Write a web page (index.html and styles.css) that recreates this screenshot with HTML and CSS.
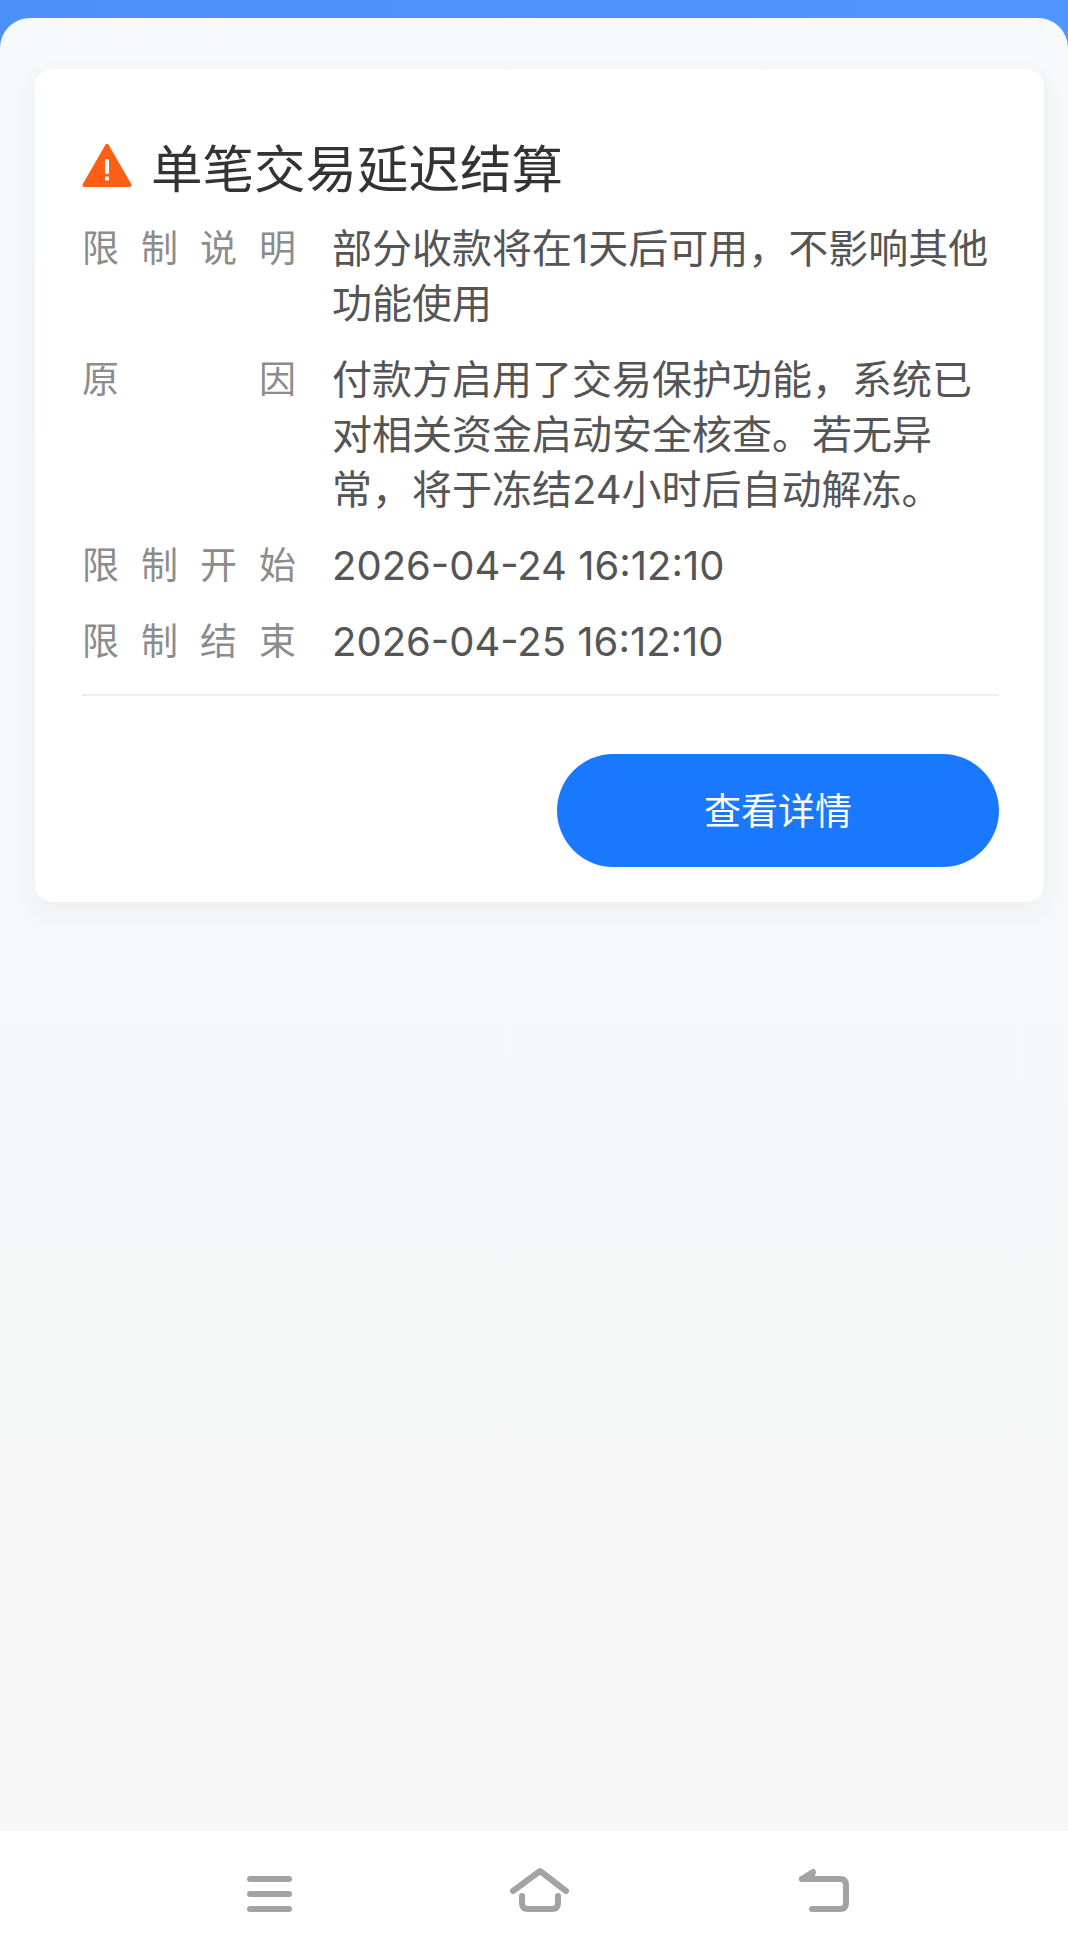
FILE: index.html
```html
<!DOCTYPE html>
<html lang="zh-CN">
  <head>
    <meta charset="utf-8" />
    <title>单笔交易延迟结算</title>
    <link rel="stylesheet" href="styles.css">
  </head>

  <body>
    <div class="page">
      <main class="sheet">
        <section class="card">
          <h1 class="card-title">
            <svg class="warn-icon" viewBox="0 0 50 44" aria-hidden="true">
              <path d="M25 2 L47.5 41 H2.5 Z" fill="#ff5f14" stroke="#ff5f14" stroke-width="4" stroke-linejoin="round" />
              <rect x="23" y="15" width="4" height="15" rx="1.5" fill="#fff" />
              <rect x="23" y="32.5" width="4" height="4" rx="1" fill="#fff" />
            </svg>
            单笔交易延迟结算
          </h1>

          <dl class="info">
            <div class="info-row">
              <dt>限制说明</dt>
              <dd>部分收款将在1天后可用，不影响其他功能使用</dd>
            </div>
            <div class="info-row">
              <dt>原因</dt>
              <dd>付款方启用了交易保护功能，系统已对相关资金启动安全核查。若无异常，将于冻结24小时后自动解冻。</dd>
            </div>
            <div class="info-row">
              <dt>限制开始</dt>
              <dd>2026-04-24 16:12:10</dd>
            </div>
            <div class="info-row">
              <dt>限制结束</dt>
              <dd>2026-04-25 16:12:10</dd>
            </div>
          </dl>

          <div class="card-actions">
            <button class="btn-primary" type="button">查看详情</button>
          </div>
        </section>
      </main>

      <nav class="navbar">
        <svg class="nav-icon" viewBox="0 0 70 70" aria-hidden="true">
          <path d="M15 18 H54 M15 33 H54 M15 48 H54" />
        </svg>
        <svg class="nav-icon" viewBox="0 0 70 70" aria-hidden="true">
          <path d="M8 30 L35 10 L61 30" />
          <path d="M17 35 V42 Q17 48 23 48 H47 Q53 48 53 42 V35" />
        </svg>
        <svg class="nav-icon nav-back" viewBox="0 0 70 70" aria-hidden="true">
          <path d="M12 18 L23 11 L21 18 H50 Q56 18 56 24 V42 Q56 48 50 48 H22" />
          <path d="M12 18 H22" />
        </svg>
      </nav>
    </div>
  </body>
</html>
```

FILE: styles.css
```css
html,
body {
  margin: 0;
  padding: 0;
}

body {
  font-family: Inter, "Noto Sans CJK SC", sans-serif;
  background: #fff;
}

.page {
  display: flex;
  flex-direction: column;
  height: 1956px;
  padding-top: 18px;
  box-sizing: border-box;
  background: linear-gradient(90deg, #4a90f6, #4f96ff);
}

.sheet {
  flex: 1;
  padding: 51px 24px 0 35px;
  border-radius: 30px 30px 0 0;
  background: linear-gradient(180deg, #f6f8fa, #f7f7f7);
}

.card {
  padding: 66px 45px 35px 47px;
  border-radius: 18px;
  background: #fff;
  box-shadow: 0 8px 24px rgba(30, 50, 90, 0.05);
}

.card-title {
  display: flex;
  align-items: center;
  gap: 19px;
  margin: 1px 0 19px;
  color: #333;
  font-size: 51.5px;
  font-weight: 400;
  line-height: 66px;
}

.warn-icon {
  flex: none;
  width: 50px;
  height: 44px;
  margin-bottom: 6px;
}

.info {
  margin: 0;
  padding-bottom: 25px;
  border-bottom: 2px solid #eee;
}

.info-row {
  display: flex;
  gap: 36px;
  margin-bottom: 21px;
  font-size: 40px;
  line-height: 55px;
}

.info-row:last-child {
  margin-bottom: 0;
}

.info-row dt {
  flex: none;
  width: 214px;
  color: #8c8c8c;
  font-size: 37px;
  text-align: justify;
  text-align-last: justify;
}

.info-row dd {
  flex: 1;
  margin: 0;
  color: #555;
}

.card-actions {
  display: flex;
  justify-content: flex-end;
  margin-top: 58px;
}

.btn-primary {
  width: 442px;
  height: 113px;
  padding: 0 0 4px;
  border: 0;
  border-radius: 57px;
  background: #1a78ff;
  color: #fff;
  font: inherit;
  font-size: 37px;
}

.navbar {
  display: flex;
  flex: none;
  gap: 200px;
  height: 125px;
  padding: 30px 0 0 235px;
  box-sizing: border-box;
  background: #fff;
}

.nav-icon {
  width: 70px;
  height: 70px;
  fill: none;
  stroke: #a3a3a3;
  stroke-width: 6;
  stroke-linecap: round;
  stroke-linejoin: round;
}

.nav-back {
  margin-left: 15px;
}
```
